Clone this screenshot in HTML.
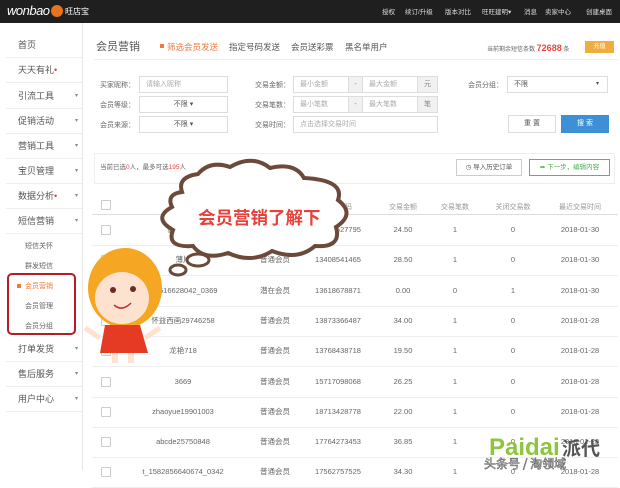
<!DOCTYPE html>
<html><head><meta charset="utf-8"><style>
*{margin:0;padding:0;box-sizing:border-box}
body{width:620px;height:470px;overflow:hidden;background:#fff;font-family:"Liberation Sans","Noto Sans CJK SC",sans-serif;color:#555;position:relative;font-size:8px}
.a{position:absolute;white-space:nowrap}
.top{position:absolute;left:0;top:0;width:620px;height:23px;background:#1f1f1f}
.side{position:absolute;left:0;top:23px;width:83px;height:447px;border-right:1px solid #e5e5e5;background:#fff}
.si{position:absolute;left:6px;width:76px;height:25px;border-bottom:1px solid #eee;font-size:9px;color:#555;line-height:25px;padding-left:12px}
.si i{position:absolute;right:4px;font-style:normal;font-size:6px;color:#888}
.sub{position:absolute;left:25px;font-size:7px;color:#666}
.inp{position:absolute;height:17px;border:1px solid #ddd;background:#fff;font-size:7px;color:#aaa;line-height:15px;padding-left:6px}
.lab{position:absolute;font-size:7px;color:#666}
.gray{position:absolute;height:17px;background:#f1f1f1;border:1px solid #ddd;font-size:7px;text-align:center;line-height:15px;color:#888}
.row{position:absolute;left:92px;width:526px;height:1px;background:#eee}
.cb{position:absolute;left:101px;width:10px;height:10px;border:1px solid #ccc;border-radius:1px}
.c{position:absolute;font-size:7.5px;line-height:10px;height:10px;color:#666;transform:translateX(-50%);white-space:nowrap}
.h{position:absolute;font-size:7px;color:#999;transform:translateX(-50%);white-space:nowrap}
.tab{position:absolute;font-size:8.5px;top:41px;color:#555;white-space:nowrap}
.nav{position:absolute;top:6px;font-size:6.5px;color:#ddd;white-space:nowrap}
</style></head><body>
<div class="top"></div>
<div class="a" style="left:7px;top:3px;color:#fff;font-size:13px;font-style:italic;letter-spacing:-.5px">wonbao</div>
<div class="a" style="left:51px;top:5px;width:12px;height:12px;border-radius:6px;background:#e8731d"></div>
<div class="a" style="left:65px;top:6px;color:#fff;font-size:8px">旺店宝</div>
<div class="nav" style="left:382px">授权</div>
<div class="nav" style="left:405px">续订/升级</div>
<div class="nav" style="left:445px">版本对比</div>
<div class="nav" style="left:482px">旺旺建明▾</div>
<div class="nav" style="left:524px">消息</div>
<div class="nav" style="left:545px">卖家中心</div>
<div class="nav" style="left:586px">创建桌面</div>

<div class="side"></div>
<div class="si" style="top:33px">首页</div>
<div class="si" style="top:58px">天天有礼<span style="color:#e33">•</span></div>
<div class="si" style="top:84px">引流工具<i>▾</i></div>
<div class="si" style="top:109px">促销活动<i>▾</i></div>
<div class="si" style="top:134px">营销工具<i>▾</i></div>
<div class="si" style="top:159px">宝贝管理<i>▾</i></div>
<div class="si" style="top:184px">数据分析<span style="color:#e33">•</span><i>▾</i></div>
<div class="si" style="top:209px">短信营销<i>▾</i></div>
<div class="sub" style="top:241px">短信关怀</div>
<div class="sub" style="top:261px">群发短信</div>
<div class="a" style="left:7px;top:273px;width:69px;height:62px;border:2px solid #b51c24;border-radius:5px"></div>
<div class="a" style="left:17px;top:284px;width:4px;height:4px;background:#f07a3a"></div>
<div class="sub" style="top:281px;color:#f07a3a">会员营销</div>
<div class="sub" style="top:301px">会员管理</div>
<div class="sub" style="top:321px">会员分组</div>
<div class="si" style="top:337px">打单发货<i>▾</i></div>
<div class="si" style="top:362px">售后服务<i>▾</i></div>
<div class="si" style="top:387px">用户中心<i>▾</i></div>

<div class="a" style="left:96px;top:38px;font-size:11px;color:#555">会员营销</div>
<div class="a" style="left:160px;top:44px;width:4px;height:4px;background:#f07a3a"></div>
<div class="tab" style="left:167px;color:#f07a3a">筛选会员发送</div>
<div class="tab" style="left:229px">指定号码发送</div>
<div class="tab" style="left:291px">会员送彩票</div>
<div class="tab" style="left:345px">黑名单用户</div>
<div class="a" style="left:487px;top:43px;font-size:6px;color:#666">当前剩余短信条数 <b style="color:#e44;font-size:9px">72688</b> 条</div>
<div class="a" style="left:585px;top:41px;width:29px;height:12px;background:#f0ad3d;color:#fff;font-size:6px;text-align:center;line-height:12px">充值</div>
<div class="a" style="left:94px;top:59px;width:524px;height:1px;background:#eee"></div>

<div class="lab" style="left:100px;top:80px">买家昵称：</div>
<div class="inp" style="left:139px;top:76px;width:89px">请输入昵称</div>
<div class="lab" style="left:100px;top:100px">会员等级：</div>
<div class="inp" style="left:139px;top:96px;width:89px;color:#555;text-align:center;padding:0">不限 ▾</div>
<div class="lab" style="left:100px;top:120px">会员来源：</div>
<div class="inp" style="left:139px;top:116px;width:89px;color:#555;text-align:center;padding:0">不限 ▾</div>
<div class="lab" style="left:255px;top:80px">交易金额：</div>
<div class="inp" style="left:293px;top:76px;width:56px">最小金额</div><div class="gray" style="left:348px;top:76px;width:15px">-</div>
<div class="inp" style="left:362px;top:76px;width:56px">最大金额</div><div class="gray" style="left:417px;top:76px;width:21px">元</div>
<div class="lab" style="left:255px;top:100px">交易笔数：</div>
<div class="inp" style="left:293px;top:96px;width:56px">最小笔数</div><div class="gray" style="left:348px;top:96px;width:15px">-</div>
<div class="inp" style="left:362px;top:96px;width:56px">最大笔数</div><div class="gray" style="left:417px;top:96px;width:21px">笔</div>
<div class="lab" style="left:255px;top:120px">交易时间：</div>
<div class="inp" style="left:293px;top:116px;width:145px">点击选择交易时间</div>
<div class="lab" style="left:468px;top:80px">会员分组：</div>
<div class="inp" style="left:507px;top:76px;width:101px;color:#555">不限<span style="float:right;margin-right:8px;font-size:6px">▾</span></div>
<div class="a" style="left:508px;top:115px;width:48px;height:18px;border:1px solid #ddd;font-size:7px;text-align:center;line-height:16px;color:#555">重 置</div>
<div class="a" style="left:561px;top:115px;width:48px;height:18px;background:#3d8fd6;font-size:7px;text-align:center;line-height:18px;color:#fff">搜 索</div>

<div class="a" style="left:94px;top:153px;width:521px;height:31px;border:1px solid #eee"></div>
<div class="a" style="left:100px;top:161px;font-size:6.5px;color:#666">当前已选<span style="color:#e44">0</span>人，最多可选<span style="color:#e44">195</span>人</div>
<div class="a" style="left:456px;top:159px;width:66px;height:17px;border:1px solid #ccc;font-size:6.5px;text-align:center;line-height:15px;color:#555">◷ 导入历史订单</div>
<div class="a" style="left:529px;top:159px;width:81px;height:17px;border:1px solid #5cb85c;font-size:6.5px;text-align:center;line-height:15px;color:#4caf50">➦ 下一步，编辑内容</div>

<div class="cb" style="top:200px"></div>
<div class="h" style="left:183px;top:202px">买家昵称</div><div class="h" style="left:275px;top:202px">会员等级</div>
<div class="h" style="left:338px;top:202px">手机号码</div><div class="h" style="left:403px;top:202px">交易金额</div>
<div class="h" style="left:455px;top:202px">交易笔数</div><div class="h" style="left:513px;top:202px">关闭交易数</div>
<div class="h" style="left:580px;top:202px">最近交易时间</div>
<div class="row" style="top:214px;background:#ddd"></div>

<div id="rows"></div>
<script>
var d=[["圆光飞扬","普通会员","13452527795","24.50","1","0","2018-01-30"],["薄片","普通会员","13408541465","28.50","1","0","2018-01-30"],["t_1516628042_0369","潜在会员","13618678871","0.00","0","1","2018-01-30"],["怀益西画29746258","普通会员","13873366487","34.00","1","0","2018-01-28"],["龙艳718","普通会员","13768438718","19.50","1","0","2018-01-28"],["3669","普通会员","15717098068","26.25","1","0","2018-01-28"],["zhaoyue19901003","普通会员","18713428778","22.00","1","0","2018-01-28"],["abcde25750848","普通会员","17764273453","36.85","1","0","2018-01-28"],["t_1582856640674_0342","普通会员","17562757525","34.30","1","0","2018-01-28"]];
var xs=[183,275,338,403,455,513,580],h="";
d.forEach(function(r,i){var y=230+i*30.3;h+='<div class="cb" style="top:'+(y-5)+'px"></div>';r.forEach(function(t,j){h+='<div class="c" style="left:'+xs[j]+'px;top:'+(y-5)+'px">'+t+'</div>'});h+='<div class="row" style="top:'+(y+15)+'px"></div>'});
document.getElementById('rows').innerHTML=h;
</script>

<svg class="a" style="left:0;top:0" width="620" height="470">
<path d="M182 192 Q177 177 198 174 Q210 160 230 167 Q252 154 270 168 Q295 162 304 178 Q345 180 338 200 Q356 214 336 227 Q342 248 315 246 Q298 261 272 251 Q252 264 228 253 Q204 261 193 246 Q166 248 173 230 Q152 218 172 207 Q166 194 182 192Z" fill="#fff" stroke="#6b4a3a" stroke-width="4"/>
<ellipse cx="198" cy="260" rx="11" ry="6" fill="#fff" stroke="#6b4a3a" stroke-width="3"/>
<ellipse cx="178" cy="270" rx="8" ry="5" fill="#fff" stroke="#6b4a3a" stroke-width="3"/>
<text x="198" y="224" font-size="17.5" font-weight="bold" fill="#e8403a" font-family="Liberation Sans,Noto Sans CJK SC,sans-serif">会员营销了解下</text>
<ellipse cx="125" cy="288" rx="37" ry="40" fill="#f5a623"/>
<ellipse cx="122" cy="298" rx="27" ry="26" fill="#fde3cf"/>
<path d="M92 273 Q120 243 160 273 Q140 265 120 271 Q100 265 92 278Z" fill="#f5a623"/>
<circle cx="113" cy="290" r="3" fill="#6b2a2a"/><circle cx="133" cy="289" r="3" fill="#6b2a2a"/>
<path d="M114 305 Q122 312 131 303" stroke="#b33" stroke-width="1.5" fill="none"/>
<path d="M105 325 L140 325 L148 353 L100 353Z" fill="#e53a23"/>
<path d="M100 338 L85 328 M145 338 L160 328" stroke="#fde3cf" stroke-width="5"/>
<rect x="112" y="353" width="6" height="10" fill="#fde3cf"/><rect x="128" y="353" width="6" height="10" fill="#fde3cf"/>
<text x="489" y="455" font-size="24" font-weight="bold" fill="#8cc63f" font-family="Liberation Sans,sans-serif">Paidai</text>
<text x="562" y="455" font-size="19" font-weight="bold" fill="#555" font-family="Noto Sans CJK SC,sans-serif">派代</text>
<text x="484" y="468" font-size="12" fill="#fff" stroke="#444" stroke-width=".5" font-family="Noto Sans CJK SC,sans-serif">头条号 / 淘领域</text>
</svg>
</body></html>
